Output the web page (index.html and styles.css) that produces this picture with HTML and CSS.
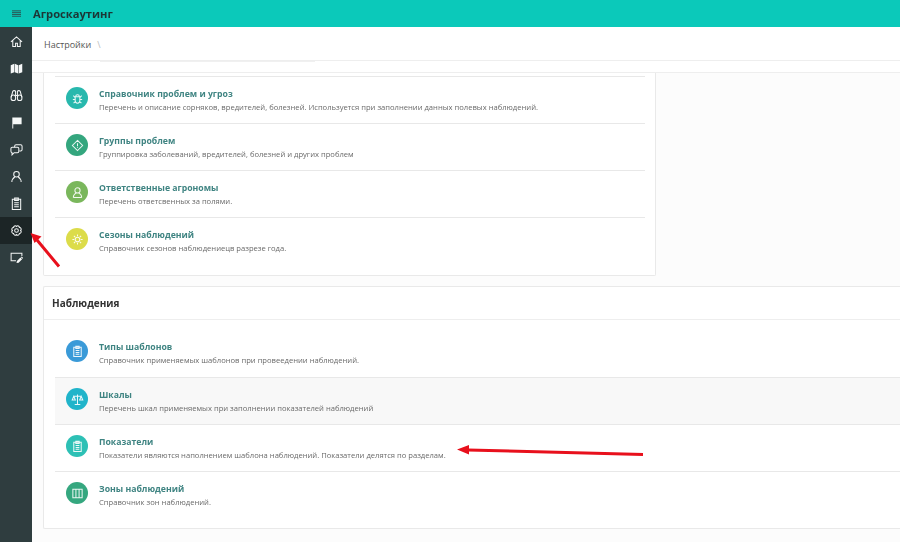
FILE: index.html
```html
<!DOCTYPE html>
<html lang="ru">
<head>
<meta charset="utf-8">
<title>Агроскаутинг</title>
<link rel="stylesheet" href="styles.css">
</head>
<body>
<header class="topbar">
  <svg class="burger" viewBox="0 0 10 8"><path d="M0 .5h10M0 2.500h10M0 4.500h10M0 6.500h10"/></svg>
  <span class="brand">Агроскаутинг</span>
</header>
<div class="layout">
  <nav class="sidebar">
    <a class="nav"><svg viewBox="0 0 14 14"><path d="M1 7.500 7 2l6 5.500M3 6v6.500h3V9h2v3.500h3V6"/></svg></a>
    <a class="nav"><svg viewBox="0 0 14 14"><path class="fill" d="M.8 3.500 4.600 2v9L.8 12.300zM5.200 2l3.600 1.500v8.800L5.200 11zM9.400 3.500 13.200 2v9l-3.800 1.300z"/></svg></a>
    <a class="nav"><svg viewBox="0 0 14 14"><path d="M1.200 9 3 2.500c.6-1 2.400-1 3 0V8M12.800 9 11 2.500c-.6-1-2.400-1-3 0V8M6 7h2"/><rect x="1.200" y="6.500" width="4.800" height="6" rx="2.300"/><rect x="8" y="6.500" width="4.800" height="6" rx="2.300"/></svg></a>
    <a class="nav"><svg viewBox="0 0 14 14"><path class="fill" d="M2.500 1.500h10v7.500H3.500v4.500h-1z"/></svg></a>
    <a class="nav"><svg viewBox="0 0 14 14"><path d="M5 4.500V3.500c0-1 .7-1.500 1.500-1.500h5c1 0 1.500.7 1.500 1.500v3.500c0 1-.7 1.500-1.500 1.500h-1.500"/><path d="M2.500 4.500h5.500c1 0 1.500.7 1.500 1.500v3c0 1-.7 1.500-1.500 1.500H4.500L2.200 12.800v-2.300C1.400 10.300 1 9.700 1 9V6c0-1 .7-1.500 1.500-1.500z"/></svg></a>
    <a class="nav"><svg viewBox="0 0 14 14"><circle cx="7" cy="4.500" r="3"/><path d="M2 13c0-3 1.600-4.500 3.200-5.500M12 13c0-3-1.600-4.500-3.200-5.500"/></svg></a>
    <a class="nav"><svg viewBox="0 0 14 14"><path d="M2.500 2.500h9v11h-9zM5 1h4v2.800H5zM4.500 6.200h5M4.500 8.400h5M4.500 10.600h5"/></svg></a>
    <a class="nav active"><svg viewBox="0 0 14 14"><path d="M11.400 7A1.750 1.750 0 0 1 10.110 10.110 1.750 1.750 0 0 1 7 11.400 1.750 1.750 0 0 1 3.890 10.110 1.750 1.750 0 0 1 2.600 7 1.750 1.750 0 0 1 3.890 3.890 1.750 1.750 0 0 1 7 2.600 1.750 1.750 0 0 1 10.110 3.890 1.750 1.750 0 0 1 11.400 7z"/><circle cx="7" cy="7" r="2"/></svg></a>
    <a class="nav"><svg viewBox="0 0 14 14"><path d="M6.500 10.500H1.200V2.500h11.600v3"/><path class="fill" d="M7 13l.5-2.200 3.700-3.700 1.800 1.800-3.700 3.700zM11.700 6.600l.8-.8 1.800 1.800-.8.8z"/></svg></a>
  </nav>
  <main class="main">
    <div class="crumbs"><span>Настройки</span><span class="slash">\</span></div>
    <div class="strip"><i class="ghost"></i></div>
    <div class="content">
      <section class="card card-first">
        <div class="list">
          <a class="item">
            <span class="badge c-bug"><svg viewBox="0 0 14 14"><path d="M4.500 5h5v4.500a2.500 2.500 0 0 1-5 0zM5 5a2 2 0 0 1 4 0M4.500 6 2.500 4M9.500 6l2-2M4.500 8H2M9.500 8H12M4.800 10l-2 2M9.200 10l2 2"/></svg></span>
            <span class="text"><b>Справочник проблем и угроз</b><small>Перечень и описание сорняков, вредителей, болезней. Используется при заполнении данных полевых наблюдений.</small></span>
          </a>
          <a class="item">
            <span class="badge c-group"><svg viewBox="0 0 14 14"><path d="M7 1.500 12.500 7 7 12.500 1.500 7zM7 4.500v3.200M7 8.800v1"/></svg></span>
            <span class="text"><b>Группы проблем</b><small>Группировка заболеваний, вредителей, болезней и других проблем</small></span>
          </a>
          <a class="item">
            <span class="badge c-person"><svg viewBox="0 0 14 14"><circle cx="7" cy="4.800" r="2.800"/><path d="M2.500 12.500c0-3 1.800-4.300 3-4.800M11.500 12.500c0-3-1.800-4.300-3-4.800M2.500 12.500h9"/></svg></span>
            <span class="text"><b>Ответственные агрономы</b><small>Перечень ответсвенных за полями.</small></span>
          </a>
          <a class="item">
            <span class="badge c-sun"><svg viewBox="0 0 14 14"><circle cx="7" cy="7" r="2.500"/><path d="M7 1.500v2M7 10.500v2M1.500 7h2M10.500 7h2M3.100 3.100l1.400 1.400M9.500 9.500l1.400 1.400M3.100 10.900l1.400-1.400M9.500 4.500l1.400-1.400"/></svg></span>
            <span class="text"><b>Сезоны наблюдений</b><small>Справочник сезонов наблюдениeцв разрезе года.</small></span>
          </a>
        </div>
      </section>
      <section class="card card-wide">
        <h2>Наблюдения</h2>
        <div class="list list-wide">
          <a class="item">
            <span class="badge c-doc"><svg viewBox="0 0 14 14"><path d="M3 2.500h8v10H3zM5.200 1.300h3.600v2.400H5.200zM5 6h4M5 8h4M5 10h4"/></svg></span>
            <span class="text"><b>Типы шаблонов</b><small>Справочник применяемых шаблонов при провеедении наблюдений.</small></span>
          </a>
          <a class="item hover">
            <span class="badge c-scale"><svg viewBox="0 0 14 14"><path d="M7 1.500v10.500M4 12.500h6M2.500 3.500h9M3 3.500 1.300 7.500h3.400zM11 3.500 9.300 7.500h3.400z"/></svg></span>
            <span class="text"><b>Шкалы</b><small>Перечень шкал применяемых при заполнении показателей наблюдений</small></span>
          </a>
          <a class="item">
            <span class="badge c-doc2"><svg viewBox="0 0 14 14"><path d="M3 2.500h8v10H3zM5.200 1.300h3.600v2.400H5.200zM5 6h4M5 8h4M5 10h4"/></svg></span>
            <span class="text"><b>Показатели</b><small>Показатели являются наполнением шаблона наблюдений. Показатели делятся по разделам.</small></span>
          </a>
          <a class="item">
            <span class="badge c-zone"><svg viewBox="0 0 14 14"><path d="M2 2.500h10v9H2zM5.300 2.500v9M8.700 2.500v9"/></svg></span>
            <span class="text"><b>Зоны наблюдений</b><small>Справочник зон наблюдений.</small></span>
          </a>
        </div>
      </section>
    </div>
  </main>
</div>
<svg class="marks" viewBox="0 0 900 542">
  <path class="mark" d="M59 266.500 37 240M643 454.500 468 450"/>
  <path class="head" d="m30.500 233 11 3.500-7 6.500zM457 449.500l12-4.500v9.500z"/>
</svg>
</body>
</html>
```
FILE: styles.css
```css
* { box-sizing: border-box; }
html, body { margin: 0; height: 100%; }
body {
  width: 900px; height: 542px; overflow: hidden; position: relative;
  font-family: "Open Sans", "Noto Sans", sans-serif;
  background: #fcfcfc; color: #444;
  display: flex; flex-direction: column;
  filter: blur(.3px);
}
.topbar {
  height: 27px; flex: none; background: #0bc9ba;
  display: flex; align-items: center; padding-left: 12px; gap: 12px;
}
.burger { width: 9px; height: 8px; fill: none; stroke: #2c4a4a; stroke-width: 1; }
.brand { font-size: 11.2px; font-weight: 700; color: #1c3636; }
.layout { flex: 1; display: flex; min-height: 0; }
.sidebar { width: 32px; flex: none; background: #2f3d3f; display: flex; flex-direction: column; padding-top: 1px; }
.nav { height: 27px; display: flex; align-items: center; justify-content: center; }
.nav svg { width: 13px; height: 13px; fill: none; stroke: #f4f6f6; stroke-width: 1.100; }
.nav .fill { fill: #f6f8f8; stroke: none; }
.nav.active { background: #1c2526; }
.main { flex: 1; min-width: 0; display: flex; flex-direction: column; }
.crumbs {
  height: 34px; flex: none; background: #fff; border-bottom: 1px solid #eee;
  display: flex; align-items: center; padding: 1px 0 0 12px; gap: 6px;
  font-size: 9px; color: #555;
}
.slash { color: #bbb; }
.strip { height: 12px; flex: none; background: #fff; border-bottom: 1px solid #eee; padding-left: 68px; }
.ghost { display: block; width: 215px; height: 1px; background: #f0f0f0; }
.content { padding: 0 0 0 11px; flex: 1; }
.card { background: #fff; border: 1px solid #e9e9e9; }
.card-first { width: 613px; border-top: 0; height: 203px; padding: 3px 10px 0 11px; border-radius: 0 0 2px 2px; }
.card-wide { width: 870px; height: 243px; margin-top: 10px; border-right: 0; border-radius: 2px 0 0 2px; }
.card-wide h2 {
  margin: 0; height: 33px; padding-left: 8px; display: flex; align-items: center;
  font-size: 10px; font-weight: 700; color: #333;
  border-bottom: 1px solid #eee;
}
.list-wide { margin: 10px 0 0 11px; }
.item {
  height: 47px; display: flex; align-items: flex-start; gap: 11px; padding: 10px 0 0 11px;
  border-top: 1px solid #e8e8e8;
}
.list-wide .item:first-child { border-top: 0; }
.item.hover { background: #f8f8f8; }
.badge {
  width: 22px; height: 22px; border-radius: 50%; flex: none;
  display: flex; align-items: center; justify-content: center;
}
.badge svg { width: 13px; height: 13px; fill: none; stroke: rgba(255,255,255,.9); stroke-width: 1.100; }
.c-bug { background: #28b8ad; }
.c-group { background: #34a67e; }
.c-person { background: #7ab75c; }
.c-sun { background: #dcdc4a; }
.c-doc { background: #3a9ad8; }
.c-scale { background: #20b4ca; }
.c-doc2 { background: #2dc0b5; }
.c-zone { background: #35a77f; }
.text { display: flex; flex-direction: column; gap: 1px; padding-top: 1px; }
.text b { font-size: 8.7px; line-height: 13px; font-weight: 700; color: #3f8482; }
.text small { font-size: 7.62px; line-height: 11.5px; color: #6a6a6a; }
.marks { position: absolute; inset: 0; width: 900px; height: 542px; pointer-events: none; }
.mark { fill: none; stroke: #e8101c; stroke-width: 3; }
.head { fill: #e8101c; }
```
